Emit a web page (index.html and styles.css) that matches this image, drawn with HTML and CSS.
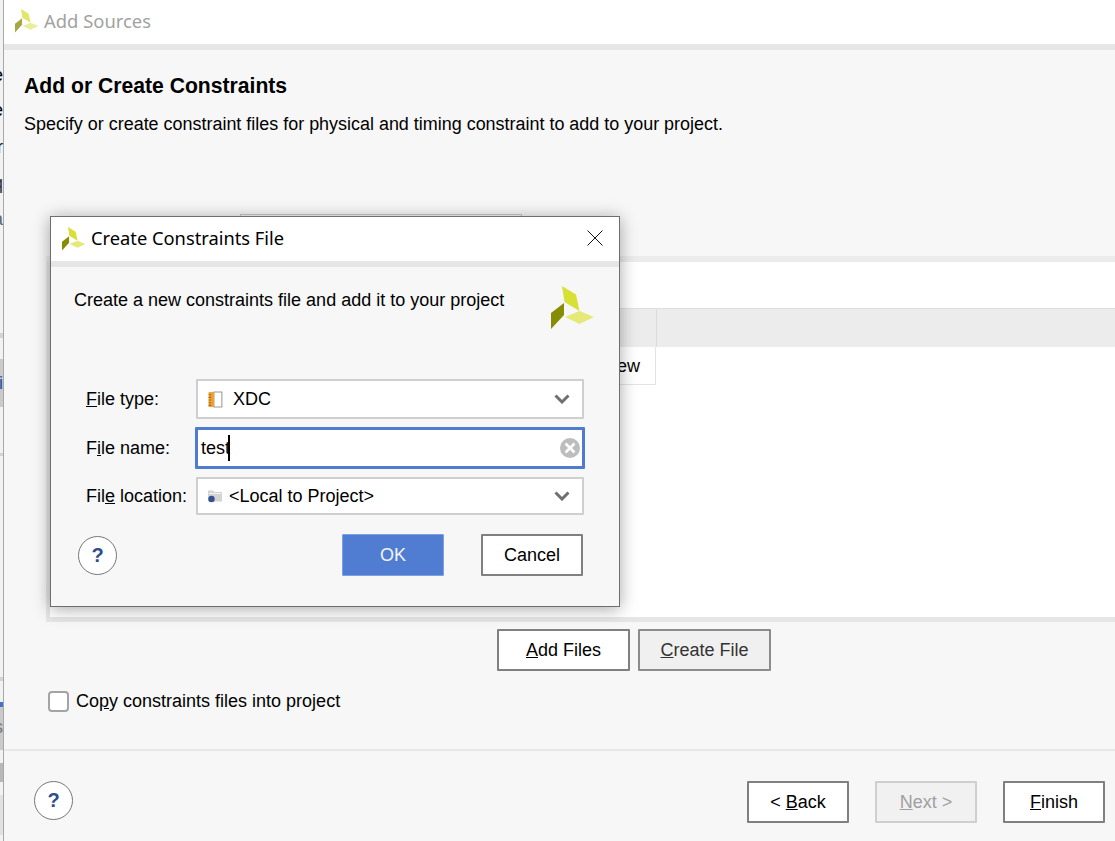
FILE: index.html
```html
<!DOCTYPE html>
<html lang="en">
<head>
  <meta charset="UTF-8">
  <title>Add Sources</title>
  <link rel="stylesheet" href="styles.css">
</head>
<body>

  <!-- Sliver of the window behind the wizard -->
  <div class="behind">
    <span class="sliver sliver-e1">e</span>
    <span class="sliver sliver-e2">e</span>
    <span class="sliver sliver-r">r</span>
    <span class="sliver sliver-q">q</span>
    <span class="sliver sliver-a">a</span>
    <span class="sliver-block block-1"></span>
    <span class="sliver-block block-2"></span>
    <span class="sliver sliver-i">i</span>
    <span class="sliver-block block-3"></span>
    <span class="sliver-block block-4"></span>
    <span class="sliver-block block-5"></span>
    <span class="sliver-blue"></span>
    <span class="sliver sliver-s">s</span>
    <span class="sliver-block block-6"></span>
    <span class="sliver-block block-7"></span>
  </div>

  <div class="wizard">
    <div class="titlebar">
      <svg class="logo-small faded" viewBox="0 0 44 44"><use href="#logo"></use></svg>
      <span class="titlebar-text">Add Sources</span>
    </div>

    <div class="wizard-body">
      <h1>Add or Create Constraints</h1>
      <p class="intro">Specify or create constraint files for physical and timing constraint to add to your project.</p>

      <div class="tab-strip"><div class="tab"></div></div>

      <div class="file-panel">
        <div class="panel-gap"></div>
        <div class="table-head"><div class="head-cell"></div></div>
        <div class="table-row"><div class="row-cell">ew</div></div>
      </div>

      <div class="panel-buttons">
        <button class="btn"><u>A</u>dd Files</button>
        <button class="btn btn-pressed"><u>C</u>reate File</button>
      </div>

      <label class="copy-option">
        <span class="checkbox"></span>
        <span>Co<u>p</u>y constraints files into project</span>
      </label>
    </div>

    <div class="wizard-footer">
      <div class="help">?</div>
      <div class="footer-buttons">
        <button class="btn"><span>&lt; <u>B</u>ack</span></button>
        <button class="btn btn-disabled"><span><u>N</u>ext &gt;</span></button>
        <button class="btn"><u>F</u>inish</button>
      </div>
    </div>
  </div>

  <!-- Modal dialog -->
  <div class="dialog">
    <div class="titlebar dialog-titlebar">
      <svg class="logo-small" viewBox="0 0 44 44"><use href="#logo"></use></svg>
      <span class="dialog-title">Create Constraints File</span>
      <svg class="close" viewBox="0 0 16 16"><path d="M0.5 0.5L15.5 15.5M15.5 0.5L0.5 15.5"></path></svg>
    </div>

    <div class="dialog-body">
      <div class="dialog-intro">
        <p>Create a new constraints file and add it to your project</p>
        <svg class="logo-large" viewBox="0 0 44 44"><use href="#logo"></use></svg>
      </div>

      <div class="fields">
        <span class="field-label"><u>F</u>ile type:</span>
        <div class="field field-xdc">
          <svg class="file-icon" viewBox="0 0 14 16">
            <path d="M5.5 1H13V15H5.5Z" fill="#fff" stroke="#999"></path>
            <rect x="0.5" y="1" width="5" height="14" fill="#f0a030"></rect>
            <path d="M0.5 3.5H3M0.5 6H3M0.5 8.5H3M0.5 11H3M0.5 13.5H3" stroke="#a86a10"></path>
          </svg>
          <span class="field-value">XDC</span>
          <svg class="chevron" viewBox="0 0 16 10"><path d="M1.5 1.5L8 8L14.5 1.5"></path></svg>
        </div>

        <span class="field-label">F<u>i</u>le name:</span>
        <div class="field field-focus">
          <span class="field-typed">test</span><span class="caret"></span>
          <svg class="clear" viewBox="0 0 20 20">
            <circle cx="10" cy="10" r="10" fill="#bdbdbd"></circle>
            <path d="M5.5 5.5L14.5 14.5M14.5 5.5L5.5 14.5" stroke="#fff" stroke-width="2.6"></path>
          </svg>
        </div>

        <span class="field-label">Fil<u>e</u> location:</span>
        <div class="field field-location">
          <svg class="folder-icon" viewBox="0 0 16 14">
            <path d="M1 3V1.5H6L7.5 3H15V12.5H1Z" fill="#d4d4d4"></path>
            <path d="M2 4.5H14" stroke="#f4f4f4"></path>
            <circle cx="4.5" cy="10" r="3.2" fill="#34528f"></circle>
          </svg>
          <span class="field-value">&lt;Local to Project&gt;</span>
          <svg class="chevron" viewBox="0 0 16 10"><path d="M1.5 1.5L8 8L14.5 1.5"></path></svg>
        </div>
      </div>

      <div class="dialog-actions">
        <div class="help">?</div>
        <button class="btn btn-primary">OK</button>
        <button class="btn">Cancel</button>
      </div>
    </div>
  </div>

  <!-- Vivado style logo, reused in three places -->
  <svg class="defs" aria-hidden="true">
    <defs>
      <g id="logo">
        <path d="M11 0L25 8.5L28.5 25L13.5 16Z" fill="#d8df35"></path>
        <path d="M13 17V29L0 43V27Z" fill="#878c05"></path>
        <path d="M14 31L28.5 25L43 31L28.5 38Z" fill="#e5e978"></path>
      </g>
    </defs>
  </svg>

</body>
</html>
```
FILE: styles.css
```css
html, body {
  height: 100%;
}
body {
  margin: 0;
  display: flex;
  height: 841px;
  overflow: hidden;
  position: relative;
  font-family: "Liberation Sans", Arial, sans-serif;
  font-size: 18px;
  color: #000;
  background: #f7f7f7;
}
button {
  font-family: inherit;
}

/* window behind */
.behind {
  width: 3px;
  flex-shrink: 0;
  position: relative;
  overflow: hidden;
  background: #f2f2f2;
  border-right: 1px solid #a8a8a8;
}
.sliver {
  position: absolute;
  right: 0;
  z-index: 1;
  font-size: 18px;
  line-height: 20px;
}
.sliver-e1 { top: 65px; }
.sliver-e2 { top: 100px; }
.sliver-r { top: 137px; }
.sliver-q { top: 173px; color: #333; }
.sliver-a { top: 209px; color: #666; }
.sliver-i { top: 373px; color: #1d4f9c; }
.sliver-s { top: 717px; color: #777; }
.sliver-block {
  position: absolute;
  left: 0;
  width: 3px;
  background: #d4d4d4;
}
.block-1 { top: 333px; height: 5px; }
.block-2 { top: 359px; height: 48px; background: #cacaca; }
.block-3 { top: 453px; height: 3px; }
.block-4 { top: 677px; height: 4px; }
.block-5 { top: 707px; height: 43px; background: #cacaca; }
.block-6 { top: 763px; height: 19px; background: #b8b8b8; }
.block-7 { top: 795px; height: 40px; background: #e2e2e2; }
.sliver-blue {
  position: absolute;
  left: 0;
  top: 702px;
  width: 3px;
  height: 5px;
  background: #3f74cc;
}

.wizard {
  flex: 1;
  display: flex;
  flex-direction: column;
  min-width: 0;
}

/* title bars */
.titlebar {
  display: flex;
  align-items: center;
  height: 44px;
  padding-left: 11px;
  background: white;
  border-bottom: 6px solid #e6e6e6;
}
.titlebar-text {
  margin-left: 5px;
  margin-top: -4px;
  font-family: "Noto Sans", sans-serif;
  font-size: 18.4px;
  color: #a2a2a2;
}
.logo-small {
  width: 24px;
  height: 24px;
  margin-top: -2px;
}
.faded {
  opacity: 0.75;
}

/* main page */
.wizard-body {
  flex: 1;
  padding: 0 0 0 20px;
}
h1 {
  margin: 24px 0 0;
  font-size: 21.15px;
  line-height: 24px;
  font-weight: bold;
}
.intro {
  margin: 16px 0 0;
  font-size: 17.95px;
  line-height: 20px;
}
.tab-strip {
  margin: 80px 0 0 22px;
  height: 42px;
  border-bottom: 6px solid #ececec;
}
.tab {
  margin-left: 194px;
  width: 282px;
  height: 42px;
  box-sizing: border-box;
  border: 1px solid #c8c8c8;
  border-bottom: none;
}
.file-panel {
  margin-left: 22px;
  height: 355px;
  background: white;
  border-left: 4px solid #e6e6e6;
  border-bottom: 5px solid #e6e6e6;
}
.panel-gap {
  height: 46px;
}
.table-head {
  height: 38px;
  background: #ececec;
  border-top: 1px solid #e0e0e0;
}
.head-cell {
  width: 606px;
  height: 38px;
  border-right: 1px solid #dcdcdc;
}
.table-row {
  height: 38px;
}
.row-cell {
  width: 606px;
  box-sizing: border-box;
  height: 38px;
  line-height: 38px;
  padding-right: 15px;
  text-align: right;
  border-right: 1px solid #e4e4e4;
  border-bottom: 1px solid #e4e4e4;
}
.panel-buttons {
  display: flex;
  gap: 8px;
  margin-top: 7px;
  margin-left: 473px;
}

/* buttons */
.btn {
  width: 102px;
  height: 42px;
  padding: 0;
  font-size: 18px;
  color: #000;
  background: white;
  border: 2px solid #808080;
  border-radius: 1px;
}
.panel-buttons .btn {
  width: 133px;
}
.btn-pressed {
  background: #f0f0f0;
  color: #333;
  border-color: #8c8c8c;
}
.btn-disabled {
  background: #f1f1f1;
  color: #a0a0a0;
  border-color: #cfcfcf;
}
.btn-primary {
  background: #507dd2;
  color: #f4f4f4;
  border: 1px solid #7ba0e4;
}
.help {
  width: 37px;
  height: 37px;
  border: 1px solid #777;
  border-radius: 50%;
  background: white;
  display: flex;
  align-items: center;
  justify-content: center;
  font-size: 20px;
  font-weight: bold;
  color: #2f4d8c;
}

/* checkbox line */
.copy-option {
  display: flex;
  align-items: center;
  gap: 7px;
  margin-top: 18px;
  margin-left: 24px;
  line-height: 24px;
}
.checkbox {
  width: 17px;
  height: 17px;
  background: white;
  border: 2px solid #a4a4a4;
  border-radius: 4px;
}

/* footer */
.wizard-footer {
  display: flex;
  align-items: flex-start;
  justify-content: space-between;
  height: 60px;
  padding: 30px 10px 0 30px;
  border-top: 2px solid #e8e8e8;
}
.footer-buttons {
  display: flex;
  gap: 26px;
}

/* dialog */
.dialog {
  position: absolute;
  left: 50px;
  top: 216px;
  width: 570px;
  height: 391px;
  box-sizing: border-box;
  background: #f7f7f7;
  border: 1px solid #6e6e6e;
  box-shadow: 0 2px 16px rgba(0, 0, 0, 0.35);
}
.dialog-titlebar {
  height: 44px;
  padding-left: 11px;
}
.dialog-titlebar .logo-small {
  margin-top: 0;
}
.dialog-title {
  margin-left: 5px;
  margin-top: -4px;
  font-family: "Noto Sans", sans-serif;
  font-size: 18.3px;
}
.close {
  width: 16px;
  height: 16px;
  margin-left: auto;
  margin-right: 16px;
  margin-top: -2px;
  fill: none;
  stroke: #111;
}
.dialog-body {
  padding: 0 35px 0 23px;
}
.dialog-intro {
  display: flex;
  justify-content: space-between;
  align-items: flex-start;
  height: 112px;
}
.dialog-intro p {
  margin: 21px 0 0;
  line-height: 24px;
}
.logo-large {
  width: 44px;
  height: 44px;
  margin-top: 19px;
  margin-right: -11px;
}
.fields {
  display: grid;
  grid-template-columns: 110px 1fr;
  grid-template-rows: 40px 40px 38px;
  row-gap: 9px;
  align-items: center;
  margin-left: 12px;
}
.field-label {
  line-height: 20px;
}
.field {
  display: flex;
  align-items: center;
  height: 100%;
  box-sizing: border-box;
  padding: 0 12px 0 10px;
  background: white;
  border: 2px solid #cfcfcf;
  border-radius: 1px;
}
.field-focus {
  margin: -1px;
  padding: 0 2px 0 3px;
  height: calc(100% + 2px);
  border: 3px solid #4f7cd1;
}
.caret {
  width: 2px;
  height: 26px;
  margin-left: -2px;
  background: #000;
}
.clear {
  width: 20px;
  height: 20px;
  margin-left: auto;
}
.file-icon {
  width: 15px;
  height: 17px;
  margin-right: 10px;
}
.folder-icon {
  width: 16px;
  height: 14px;
  margin-left: -1px;
  margin-right: 6px;
}
.chevron {
  width: 16px;
  height: 10px;
  margin-left: auto;
  fill: none;
  stroke: #707070;
  stroke-width: 3;
}
.dialog-actions {
  display: flex;
  align-items: center;
  margin: 19px 1px 0 4px;
}
.dialog-actions .btn-primary {
  margin-left: auto;
}
.dialog-actions .btn:last-child {
  margin-left: 37px;
}
.defs {
  position: absolute;
  width: 0;
  height: 0;
}
```
